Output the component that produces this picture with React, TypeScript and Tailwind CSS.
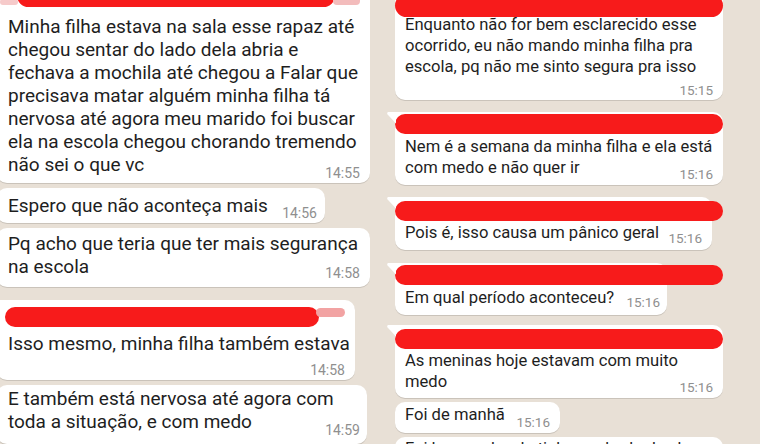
import type { ReactNode } from "react"

function Time({ t, className = "" }: { t: string; className?: string }) {
  return (
    <span className={`font-['Roboto',sans-serif] leading-[16px] text-[#8f8f8f] whitespace-nowrap ${className}`}>
      {t}
    </span>
  )
}

function Tail() {
  return (
    <svg className="absolute -left-[8px] top-0" width="9" height="13" viewBox="0 0 9 13">
      <path d="M9 0H1.6C0.3 0 -0.3 1.4 0.6 2.4L9 11.5Z" fill="#ffffff" />
    </svg>
  )
}

function Lines({ lines, className = "" }: { lines: string[]; className?: string }) {
  return (
    <div className={className}>
      {lines.map((l) => (
        <div key={l} className="whitespace-nowrap">
          {l}
        </div>
      ))}
    </div>
  )
}

function Bubble({ className, children }: { className: string; children: ReactNode }) {
  return (
    <div className={`relative bg-white shadow-[0_1px_0.5px_rgba(0,0,0,0.13)] ${className}`}>{children}</div>
  )
}

export default function App() {
  return (
    <div className="w-[760px] h-[444px] overflow-hidden flex bg-[#e8e0d6] text-[#1e1e1e] font-['Roboto',sans-serif]">
      {/* left screenshot */}
      <div className="w-[378px] shrink-0 flex flex-col -mt-[18px] text-[19px] leading-[23px]">
        <Bubble className="-ml-[3px] w-[373px] rounded-[10px] pl-[11px] pr-[10px] pt-[2px] pb-[2px]">
          <div className="flex h-[23px] -ml-[8px]">
            <div className="mt-[15px] h-[6px] w-[18px] rounded-full bg-[#f6caca]" />
            <div className="h-[23px] w-[326px] -ml-[1px] rounded-full bg-[#f71b1b]" />
            <div className="mt-[13px] h-[8px] w-[28px] -ml-[2px] rounded-full bg-[#f3bcbc]" />
          </div>
          <Lines
            className="mt-[8px]"
            lines={[
              "Minha filha estava na sala esse rapaz até",
              "chegou sentar do lado dela abria e",
              "fechava a mochila até chegou a Falar que",
              "precisava matar alguém minha filha tá",
              "nervosa até agora meu marido foi buscar",
              "ela na escola chegou chorando tremendo",
              "não sei o que vc",
            ]}
          />
          <div className="flex justify-end -mt-[11px] h-[16px]">
            <Time t="14:55" className="text-[14px]" />
          </div>
        </Bubble>

        <Bubble className="mt-[5px] -ml-[3px] w-[328px] rounded-[10px] pl-[11px] pr-[8px] pt-[6px] pb-[6px]">
          <div className="flex items-end justify-between">
            <span className="whitespace-nowrap">Espero que não aconteça mais</span>
            <Time t="14:56" className="text-[14px] -mb-[4px]" />
          </div>
        </Bubble>

        <Bubble className="mt-[5px] -ml-[3px] w-[373px] rounded-[10px] pl-[11px] pr-[10px] pt-[4px] pb-[6px]">
          <Lines lines={["Pq acho que teria que ter mais segurança", "na escola"]} />
          <div className="flex justify-end -mt-[13px] h-[16px]">
            <Time t="14:58" className="text-[14px]" />
          </div>
        </Bubble>

        <Bubble className="mt-[13px] -ml-[3px] w-[358px] rounded-[10px] rounded-tl-none pl-[11px] pr-[10px] pt-[7px] pb-[2px]">
          <div className="flex -ml-[3px]">
            <div className="h-[20px] w-[330px] rounded-full bg-[#f71b1b]" />
            <div className="mt-[1px] h-[9px] w-[30px] -ml-[3px] rounded-full bg-[#f2a3a3]" />
          </div>
          <Lines className="mt-[5px]" lines={["Isso mesmo, minha filha também estava"]} />
          <div className="flex justify-end mt-[7px] h-[16px]">
            <Time t="14:58" className="text-[14px]" />
          </div>
        </Bubble>

        <Bubble className="mt-[5px] -ml-[3px] w-[370px] rounded-[10px] pl-[11px] pr-[7px] pt-[2px] pb-[6px]">
          <Lines lines={["E também está nervosa até agora com", "toda a situação, e com medo"]} />
          <div className="flex justify-end -mt-[11px] h-[16px]">
            <Time t="14:59" className="text-[14px]" />
          </div>
        </Bubble>
      </div>

      {/* right screenshot */}
      <div className="flex-1 flex flex-col pl-[17px] -mt-[8px] text-[16.6px] leading-[21px]">
        <Bubble className="w-[328px] rounded-[10px] px-[10px] pt-[2px] pb-[2px]">
          <div className="relative z-10 -mx-[10px] h-[23px] rounded-full bg-[#f71b1b]" />
          <Lines
            className="-mt-[3px]"
            lines={[
              "Enquanto não for bem esclarecido esse",
              "ocorrido, eu não mando minha filha pra",
              "escola, pq não me sinto segura pra isso",
            ]}
          />
          <div className="flex justify-end mt-[5px] h-[16px]">
            <Time t="15:15" className="text-[13.5px]" />
          </div>
        </Bubble>

        <Bubble className="mt-[12px] w-[328px] rounded-[10px] rounded-tl-none px-[10px] pt-[2px] pb-[3px]">
          <Tail />
          <div className="-mx-[10px] h-[20px] rounded-full bg-[#f71b1b]" />
          <Lines className="mt-[1.5px]" lines={["Nem é a semana da minha filha e ela está", "com medo e não quer ir"]} />
          <div className="flex justify-end -mt-[11.5px] h-[16px]">
            <Time t="15:16" className="text-[13.5px]" />
          </div>
        </Bubble>

        <Bubble className="mt-[12px] w-[317px] rounded-[10px] rounded-tl-none px-[10px] pt-[4px] pb-[7.5px]">
          <Tail />
          <div className="-ml-[10px] w-[328px] h-[20px] rounded-full bg-[#f71b1b]" />
          <div className="mt-[0.5px] flex items-end justify-between">
            <span className="whitespace-nowrap">Pois é, isso causa um pânico geral</span>
            <Time t="15:16" className="text-[13.5px] -mb-[3.5px]" />
          </div>
        </Bubble>

        <Bubble className="mt-[13px] w-[272px] rounded-[10px] rounded-tl-none pl-[10px] pr-[7px] pt-[2px] pb-[7.5px]">
          <Tail />
          <div className="-ml-[10px] w-[328px] h-[20px] rounded-full bg-[#f71b1b]" />
          <div className="mt-[1.5px] flex items-end justify-between">
            <span className="whitespace-nowrap">Em qual período aconteceu?</span>
            <Time t="15:16" className="text-[13.5px] -mb-[2.5px]" />
          </div>
        </Bubble>

        <Bubble className="mt-[10px] w-[328px] rounded-[10px] rounded-tl-none px-[10px] pt-[4px] pb-[3px]">
          <Tail />
          <div className="-mx-[10px] h-[20px] rounded-full bg-[#f71b1b]" />
          <Lines className="mt-[0.5px]" lines={["As meninas hoje estavam com muito", "medo"]} />
          <div className="flex justify-end -mt-[12.5px] h-[16px]">
            <Time t="15:16" className="text-[13.5px]" />
          </div>
        </Bubble>

        <Bubble className="mt-[4px] w-[165px] rounded-[10px] pl-[10px] pr-[10px] pt-[1.5px] pb-[8.5px]">
          <div className="flex items-end justify-between">
            <span className="whitespace-nowrap">Foi de manhã</span>
            <Time t="15:16" className="text-[13.5px] -mb-[5.5px]" />
          </div>
        </Bubble>

        <Bubble className="mt-[4px] w-[328px] rounded-[10px] px-[10px] pt-[1px] pb-[8px]">
          <Lines lines={["Foi logo cedo, ela tinha acabado de chegar"]} />
        </Bubble>
      </div>
    </div>
  )
}
